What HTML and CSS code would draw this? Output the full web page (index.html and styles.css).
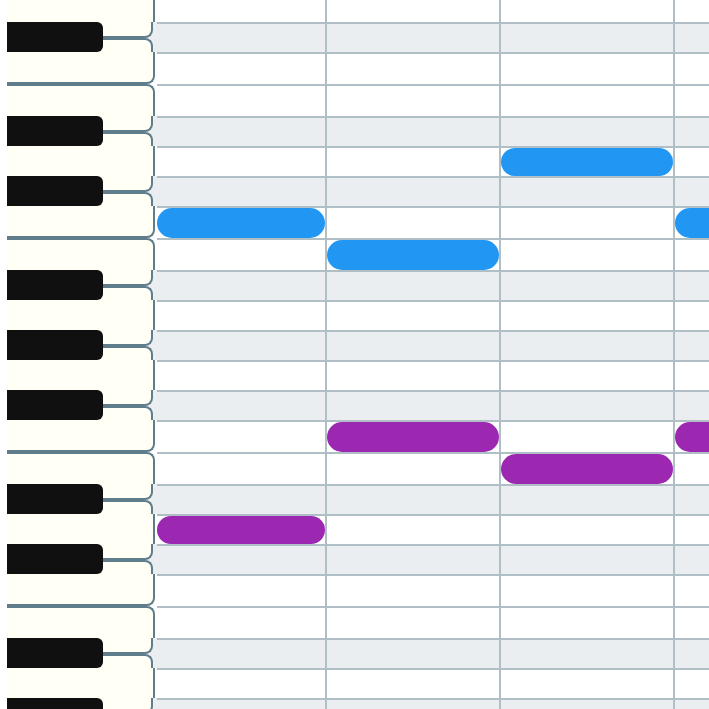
FILE: index.html
```html
<!DOCTYPE html>
<html lang="en">
<head>
<meta charset="utf-8">
<meta name="viewport" content="width=device-width, initial-scale=1">
<title>Piano roll</title>
<link rel="stylesheet" href="styles.css">
</head>
<body>
<main class="roll">
  <div class="row first"><div class="key"></div><div class="cell"></div><div class="cell"></div><div class="cell"></div><div class="cell"></div></div>
  <div class="row sharp"><div class="key"><span class="black"></span></div><div class="cell"></div><div class="cell"></div><div class="cell"></div><div class="cell"></div></div>
  <div class="row low"><div class="key"></div><div class="cell"></div><div class="cell"></div><div class="cell"></div><div class="cell"></div></div>
  <div class="row high"><div class="key"></div><div class="cell"></div><div class="cell"></div><div class="cell"></div><div class="cell"></div></div>
  <div class="row sharp"><div class="key"><span class="black"></span></div><div class="cell"></div><div class="cell"></div><div class="cell"></div><div class="cell"></div></div>
  <div class="row"><div class="key"></div><div class="cell"></div><div class="cell"></div><div class="cell"><div class="note melody"></div></div><div class="cell"></div></div>
  <div class="row sharp"><div class="key"><span class="black"></span></div><div class="cell"></div><div class="cell"></div><div class="cell"></div><div class="cell"></div></div>
  <div class="row low"><div class="key"></div><div class="cell"><div class="note melody"></div></div><div class="cell"></div><div class="cell"></div><div class="cell"><div class="note melody"></div></div></div>
  <div class="row high"><div class="key"></div><div class="cell"></div><div class="cell"><div class="note melody"></div></div><div class="cell"></div><div class="cell"></div></div>
  <div class="row sharp"><div class="key"><span class="black"></span></div><div class="cell"></div><div class="cell"></div><div class="cell"></div><div class="cell"></div></div>
  <div class="row"><div class="key"></div><div class="cell"></div><div class="cell"></div><div class="cell"></div><div class="cell"></div></div>
  <div class="row sharp"><div class="key"><span class="black"></span></div><div class="cell"></div><div class="cell"></div><div class="cell"></div><div class="cell"></div></div>
  <div class="row"><div class="key"></div><div class="cell"></div><div class="cell"></div><div class="cell"></div><div class="cell"></div></div>
  <div class="row sharp"><div class="key"><span class="black"></span></div><div class="cell"></div><div class="cell"></div><div class="cell"></div><div class="cell"></div></div>
  <div class="row low"><div class="key"></div><div class="cell"></div><div class="cell"><div class="note bass"></div></div><div class="cell"></div><div class="cell"><div class="note bass"></div></div></div>
  <div class="row high"><div class="key"></div><div class="cell"></div><div class="cell"></div><div class="cell"><div class="note bass"></div></div><div class="cell"></div></div>
  <div class="row sharp"><div class="key"><span class="black"></span></div><div class="cell"></div><div class="cell"></div><div class="cell"></div><div class="cell"></div></div>
  <div class="row"><div class="key"></div><div class="cell"><div class="note bass"></div></div><div class="cell"></div><div class="cell"></div><div class="cell"></div></div>
  <div class="row sharp"><div class="key"><span class="black"></span></div><div class="cell"></div><div class="cell"></div><div class="cell"></div><div class="cell"></div></div>
  <div class="row low"><div class="key"></div><div class="cell"></div><div class="cell"></div><div class="cell"></div><div class="cell"></div></div>
  <div class="row high"><div class="key"></div><div class="cell"></div><div class="cell"></div><div class="cell"></div><div class="cell"></div></div>
  <div class="row sharp"><div class="key"><span class="black"></span></div><div class="cell"></div><div class="cell"></div><div class="cell"></div><div class="cell"></div></div>
  <div class="row"><div class="key"></div><div class="cell"></div><div class="cell"></div><div class="cell"></div><div class="cell"></div></div>
  <div class="row sharp"><div class="key"><span class="black"></span></div><div class="cell"></div><div class="cell"></div><div class="cell"></div><div class="cell"></div></div>
</main>
</body>
</html>
```
FILE: styles.css
```css
* {
  box-sizing: border-box;
}

body {
  margin: 0;
  background: #fff;
  font-family: "Liberation Sans", sans-serif;
}

.roll {
  height: 100vh;
  padding-left: 7px;
  overflow: hidden;
}

.row {
  display: grid;
  grid-template-columns: 150px 170px 174px 174px 1fr;
  height: 30px;
  background: #fff;
}

.first {
  height: 22px;
}

.low,
.high {
  height: 32px;
}

.sharp {
  background: #eaeef1;
}

/* Natural keys: neighbours without a sharp between them share a rounded edge. */
.key {
  margin-right: 2px;
  background: #fffff6;
  border: 0 solid #607d8b;
  border-right-width: 2px;
}

.low .key {
  border-bottom-width: 2px;
  border-bottom-right-radius: 8px;
}

.high .key {
  border-top-width: 2px;
  border-top-right-radius: 8px;
}

/* Sharp rows: two halves of the neighbouring natural keys behind a black key. */
.sharp .key {
  display: grid;
  grid-template: 16px 14px / 96px 1fr;
  margin-right: 4px;
  background: none;
  border: 0;
}

.sharp .key::before,
.sharp .key::after {
  content: "";
  grid-column: 1 / 3;
  background: #fffff6;
  border: 0 solid #607d8b;
  border-right-width: 2px;
}

.sharp .key::before {
  grid-row: 1;
  border-bottom-width: 2px;
  border-bottom-right-radius: 8px;
}

.sharp .key::after {
  grid-row: 2;
  border-top-width: 2px;
  border-top-right-radius: 8px;
}

.black {
  grid-area: 1 / 1 / 3 / 2;
  z-index: 1;
  background: #101010;
  border-radius: 0 6px 6px 0;
}

.cell {
  border: 0 solid #b0bec5;
  border-top-width: 2px;
  border-right-width: 2px;
}

.cell:last-child {
  border-right-width: 0;
  overflow: hidden;
}

.first .cell {
  border-top-width: 0;
}

.note {
  height: 100%;
  border-radius: 15px;
}

.melody {
  background: #2196f3;
}

.bass {
  background: #9c27b0;
}

.cell:last-child .note {
  border-radius: 15px 0 0 15px;
}
```
